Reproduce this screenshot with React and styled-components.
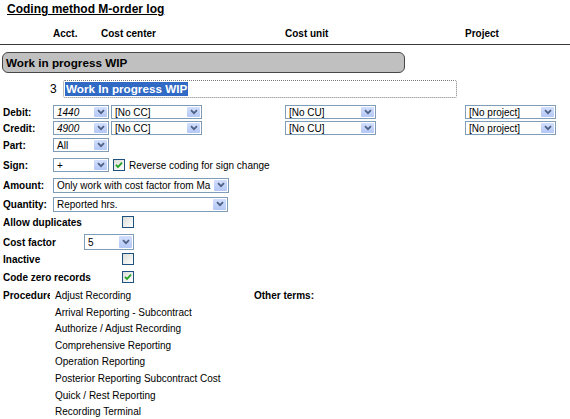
import React from "react";
import styled, { createGlobalStyle } from "styled-components";

const Global = createGlobalStyle`
  html, body {
    margin: 0;
    padding: 0;
    background: #ffffff;
  }
  body {
    font-family: "Liberation Sans", Arial, sans-serif;
    font-size: 10px;
    color: #000;
    overflow: hidden;
  }
`;

const Page = styled.div`
  width: 570px;
  height: 419px;
  overflow: hidden;
`;

const Title = styled.div`
  height: 23px;
  box-sizing: border-box;
  padding: 2px 0 0 7px;
  font-size: 12px;
  font-weight: bold;
  line-height: 14px;
  text-decoration: underline;
`;

const HeaderRow = styled.div`
  display: flex;
  align-items: center;
  height: 21px;
  padding-left: 53px;
  border-bottom: 1px solid #3a3a3a;
  font-weight: bold;
`;

const HeadCell = styled.div`
  width: ${(p) => p.$w}px;
  flex: none;
`;

const Bar = styled.div`
  margin: 7px 0 0 2px;
  width: 403px;
  height: 21px;
  box-sizing: border-box;
  border: 1px solid #474747;
  border-radius: 6px;
  background: #c0c0c0;
  display: flex;
  align-items: center;
  padding-left: 3px;
  font-size: 11.7px;
  font-weight: bold;
`;

const NameRow = styled.div`
  display: flex;
  align-items: center;
  margin-top: 7px;
  padding-left: 50px;
`;

const Num = styled.div`
  width: 13px;
  font-size: 12px;
`;

const NameInput = styled.div`
  width: 394px;
  height: 18px;
  box-sizing: border-box;
  border: 1px dotted #7a7a7a;
  border-radius: 2px;
  display: flex;
  align-items: center;
  padding-left: 1px;
`;

const Selected = styled.span`
  background: #316ac5;
  color: #fff;
  font-size: 11.7px;
  font-weight: bold;
  line-height: 14px;
  padding: 0 1px;
`;

const Form = styled.div`
  padding-left: 3px;
`;

const Row = styled.div`
  display: flex;
  align-items: center;
  height: 16px;
  margin-top: ${(p) => p.$top || 0}px;
`;

const Label = styled.div`
  width: ${(p) => p.$w || 50}px;
  flex: none;
  font-weight: bold;
  white-space: nowrap;
  overflow: hidden;
`;

const Cell = styled.div`
  width: ${(p) => p.$w}px;
  flex: none;
  display: flex;
  align-items: center;
`;

const SelectBox = styled.div`
  width: ${(p) => p.$w}px;
  height: ${(p) => p.$h || 14}px;
  box-sizing: border-box;
  border: 1px solid #7f9db9;
  background: #fff;
  display: flex;
  align-items: stretch;
  flex: none;
`;

const SelectText = styled.div`
  flex: 1;
  min-width: 0;
  padding-left: 3px;
  display: flex;
  align-items: center;
  white-space: nowrap;
  overflow: hidden;
  font-style: ${(p) => (p.$italic ? "italic" : "normal")};
`;

const Arrow = styled.div`
  width: 13px;
  margin: 1px;
  flex: none;
  border-radius: 1px;
  background: linear-gradient(#d2defc, #b4c8f6);
  display: flex;
  align-items: center;
  justify-content: center;
`;

const Box = styled.div`
  width: 12px;
  height: 12px;
  box-sizing: border-box;
  border: 1px solid #1c5180;
  background: linear-gradient(135deg, #dcdcd7, #ffffff);
  display: flex;
  align-items: center;
  justify-content: center;
  flex: none;
  margin-right: ${(p) => p.$mr || 0}px;
`;

const Text = styled.span`
  white-space: nowrap;
`;

const ProcRow = styled.div`
  display: flex;
  margin-top: 3px;
`;

const ProcList = styled.div`
  width: 199px;
  flex: none;
`;

const ProcItem = styled.div`
  height: 16.6px;
  line-height: 16px;
  white-space: nowrap;
`;

const ProcLabel = styled.div`
  width: 47px;
  margin-right: 5px;
  height: 16px;
  line-height: 16px;
  font-weight: bold;
  white-space: nowrap;
  overflow: hidden;
  flex: none;
`;

const Other = styled.div`
  font-weight: bold;
  line-height: 16px;
`;

const Select = ({ w, h, value, italic }) => (
  <SelectBox $w={w} $h={h}>
    <SelectText $italic={italic}>{value}</SelectText>
    <Arrow>
      <svg width="8" height="6" viewBox="0 0 8 6">
        <path d="M1 1.2 L4 4.2 L7 1.2" fill="none" stroke="#4d6185" strokeWidth="1.8" />
      </svg>
    </Arrow>
  </SelectBox>
);

const Check = ({ checked, mr }) => (
  <Box $mr={mr}>
    {checked && (
      <svg width="8" height="8" viewBox="0 0 8 8">
        <path d="M1 3.8 L3 6 L7 1.6" fill="none" stroke="#21a121" strokeWidth="1.8" />
      </svg>
    )}
  </Box>
);

const procedures = [
  "Adjust Recording",
  "Arrival Reporting - Subcontract",
  "Authorize / Adjust Recording",
  "Comprehensive Reporting",
  "Operation Reporting",
  "Posterior Reporting Subcontract Cost",
  "Quick / Rest Reporting",
  "Recording Terminal",
];

const AccountRow = ({ label, acct, top }) => (
  <Row $top={top}>
    <Label>{label}</Label>
    <Cell $w={58}>
      <Select w={56} value={acct} italic />
    </Cell>
    <Cell $w={174}>
      <Select w={91} value="[No CC]" />
    </Cell>
    <Cell $w={180}>
      <Select w={91} value="[No CU]" />
    </Cell>
    <Cell $w={91}>
      <Select w={91} value="[No project]" />
    </Cell>
  </Row>
);

export default function App() {
  return (
    <Page>
      <Global />
      <Title>Coding method M-order log</Title>
      <HeaderRow>
        <HeadCell $w={48}>Acct.</HeadCell>
        <HeadCell $w={184}>Cost center</HeadCell>
        <HeadCell $w={180}>Cost unit</HeadCell>
        <HeadCell $w={80}>Project</HeadCell>
      </HeaderRow>
      <Bar>Work in progress WIP</Bar>
      <NameRow>
        <Num>3</Num>
        <NameInput>
          <Selected>Work In progress WIP</Selected>
        </NameInput>
      </NameRow>
      <Form>
        <AccountRow label="Debit:" acct="1440" top={6} />
        <AccountRow label="Credit:" acct="4900" top={0} />
        <Row $top={1}>
          <Label>Part:</Label>
          <Select w={56} value="All" />
        </Row>
        <Row $top={4}>
          <Label>Sign:</Label>
          <Cell $w={60}>
            <Select w={56} value="+" />
          </Cell>
          <Check checked mr={4} />
          <Text>Reverse coding for sign change</Text>
        </Row>
        <Row $top={4}>
          <Label>Amount:</Label>
          <Select w={176} h={15} value="Only work with cost factor from Ma" />
        </Row>
        <Row $top={3}>
          <Label>Quantity:</Label>
          <Select w={175} h={15} value="Reported hrs." />
        </Row>
        <Row $top={2}>
          <Label $w={119}>Allow duplicates</Label>
          <Check />
        </Row>
        <Row $top={4}>
          <Label $w={81}>Cost factor</Label>
          <Select w={50} h={16} value="5" />
        </Row>
        <Row $top={1}>
          <Label $w={119}>Inactive</Label>
          <Check />
        </Row>
        <Row $top={2}>
          <Label $w={119}>Code zero records</Label>
          <Check checked />
        </Row>
        <ProcRow>
          <ProcLabel>Procedure</ProcLabel>
          <ProcList>
            {procedures.map((p) => (
              <ProcItem key={p}>{p}</ProcItem>
            ))}
          </ProcList>
          <Other>Other terms:</Other>
        </ProcRow>
      </Form>
    </Page>
  );
}
